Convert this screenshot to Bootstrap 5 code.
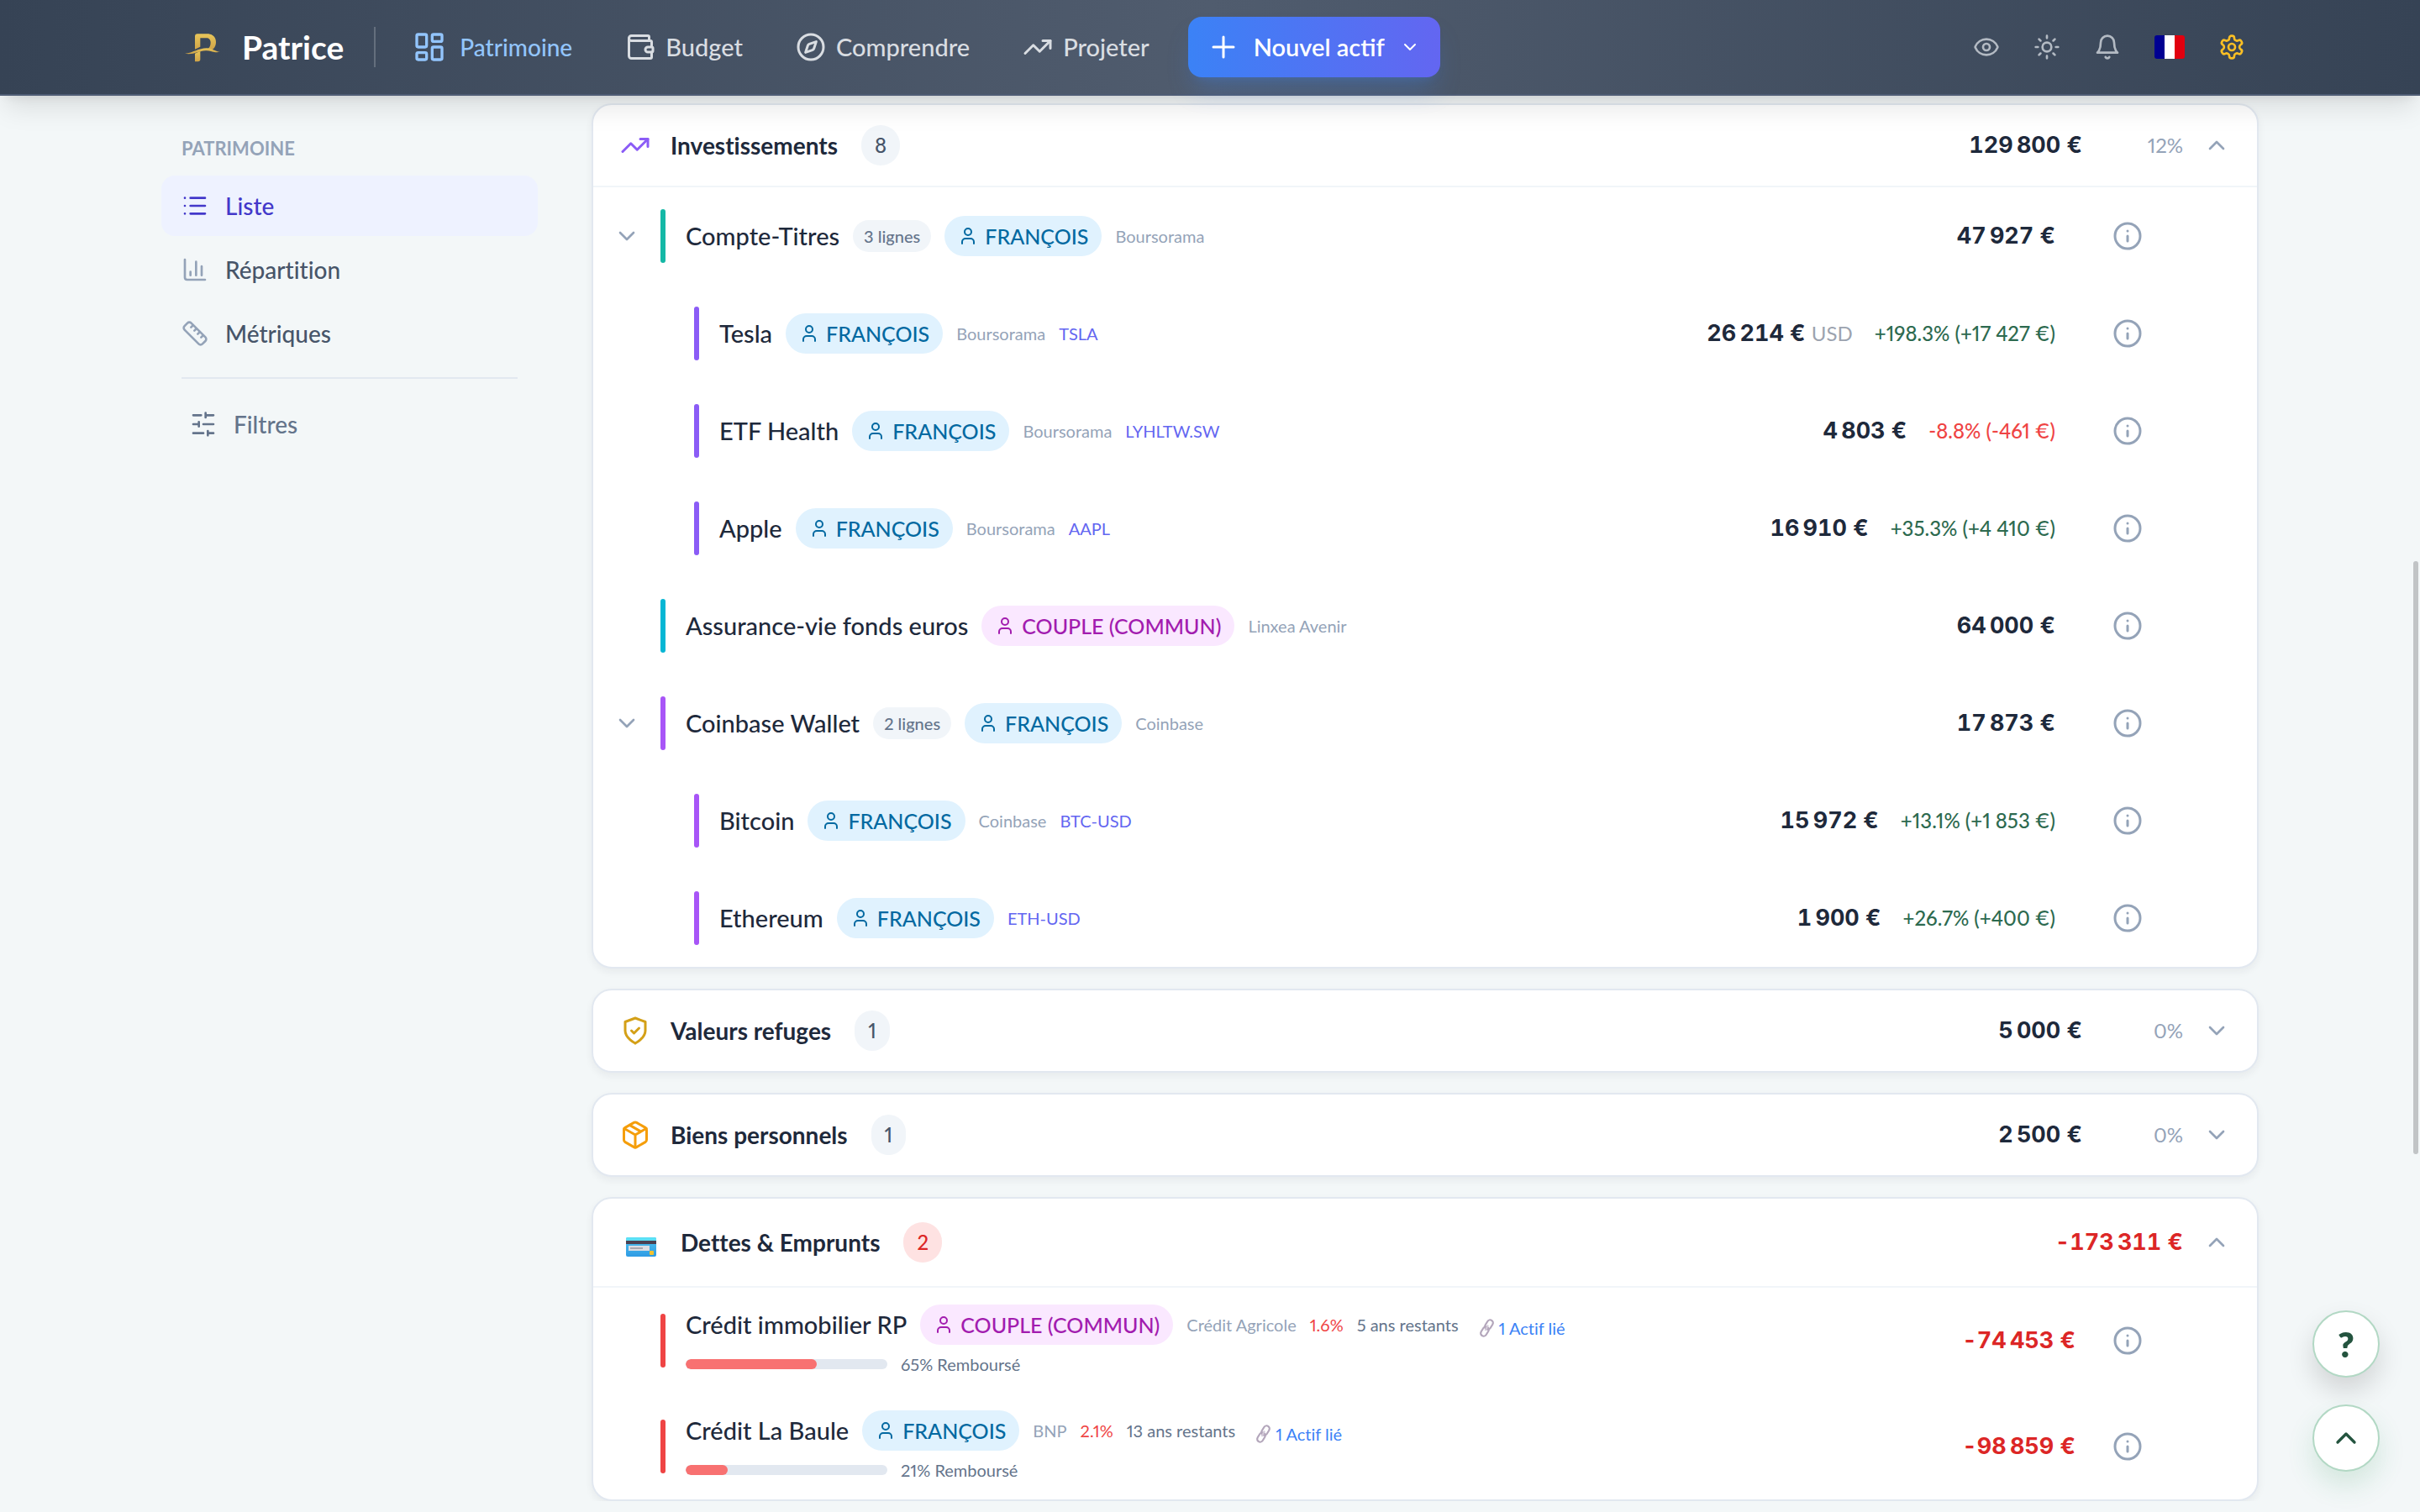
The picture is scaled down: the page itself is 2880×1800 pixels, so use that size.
<!DOCTYPE html>
<html lang="fr">
<head>
<meta charset="utf-8">
<meta name="viewport" content="width=device-width, initial-scale=1">
<title>Patrice – Patrimoine</title>
<link href="https://cdn.jsdelivr.net/npm/bootstrap@5.3.0/dist/css/bootstrap.min.css" rel="stylesheet">
<style>
  :root { --ink: #1e293b; --slate: #475569; --muted: #64748b; --soft: #94a3b8; --line: #e2e8f0; --wash: #f1f5f9; }
  body { font-family: Lato, "Open Sans", sans-serif; font-size: 28px; line-height: 40px; color: var(--ink); background: #f3f7f8; font-variant-ligatures: none; font-variant-numeric: proportional-nums; }
  a { text-decoration: none; }
  .ico { flex: none; fill: none; stroke: currentColor; stroke-width: 2; stroke-linecap: round; stroke-linejoin: round; width: 36px; height: 36px; }
  .ico-40 { width: 40px; height: 40px; }
  .ico-32 { width: 32px; height: 32px; }
  .ico-24 { width: 24px; height: 24px; }
  .shell { width: 100%; max-width: 2496px; margin-inline: auto; }

  .topbar { height: 114px; z-index: 10; background: linear-gradient(90deg, #364355, #505c6e 50%, #364355); border-bottom: 2px solid #4f5d75; box-shadow: 0 20px 30px -6px rgba(0,0,0,.1), 0 8px 12px -8px rgba(0,0,0,.1); }
  .topbar .shell { padding-inline: 28px 16px; }
  .brand { gap: 26px; color: #fff; font-size: 39px; font-weight: 700; }
  .brand:hover { color: #fff; }
  .rule-v { width: 2px; height: 48px; margin-inline: 36px 44px; background: rgba(255,255,255,.2); }
  .main-links { gap: 63px; }
  .main-links a { gap: 12px; font-size: 29px; font-weight: 500; color: #d9dde2; }
  .main-links a.on { gap: 16px; font-size: 28px; color: #93c5fd; }
  .btn-new { height: 72px; margin-left: 46px; padding: 0 24px; gap: 18px; border: 0; border-radius: 16px; color: #fff; font-size: 29px; font-weight: 600; background: linear-gradient(90deg, #3b82f6, #6366f1); box-shadow: 0 20px 30px -6px rgba(59,130,246,.25), 0 8px 12px -8px rgba(59,130,246,.25); }
  .tools { gap: 40px; color: #b3bac3; }
  .tools button { padding: 0; border: 0; background: none; color: inherit; line-height: 0; }
  .tools .gear { color: #fbbf24; }

  .layout { gap: 64px; padding-top: 9px; }
  .side { width: 448px; flex: none; padding-top: 38px; }
  .side-title { margin: 0 0 16px; padding-inline: 24px; font-size: 22px; line-height: 32px; font-weight: 700; color: var(--soft); }
  .side-links { gap: 4px; }
  .side-links a { height: 72px; padding-inline: 24px; gap: 20px; border-radius: 16px; font-weight: 500; color: var(--slate); }
  .side-links .ico { color: var(--soft); }
  .side-links a.on, .side-links a.on .ico { color: #4338ca; }
  .side-links a.on { background: #eef2ff; }
  .side-rule { height: 2px; margin: 16px 24px; background: var(--line); }
  .filter-btn { height: 76px; padding: 0 34px; gap: 20px; border: 0; background: none; color: var(--muted); font-weight: 500; }

  .panel-list { gap: 24px; min-width: 0; }
  .panel { background: #fff; border: 2px solid var(--line); border-radius: 24px; box-shadow: 0 4px 10px rgba(30,41,59,.06); }
  .panel-head { min-height: 96px; padding-inline: 32px; gap: 24px; }
  .panel-head.open { border-bottom: 2px solid var(--wash); min-height: 98px; }
  .panel-head.tall { min-height: 106px; }
  .panel-head h2 { margin: 0 4px 0 0; font-size: 28px; line-height: 40px; font-weight: 700; }
  .tally { height: 48px; padding-inline: 16px; border-radius: 24px; background: var(--wash); color: var(--slate); font-size: 24px; line-height: 48px; font-weight: 500; }
  .tally.debt { background: #fee2e2; color: #dc2626; }
  .share { width: 96px; text-align: right; font-size: 24px; color: var(--soft); }
  .toggle { padding: 0; border: 0; background: none; color: var(--soft); line-height: 0; }
  .sum { font-family: Inter, sans-serif; font-weight: 700; font-size: 27px; font-variant-numeric: tabular-nums; white-space: nowrap; }
  .neg { color: #dc2626; }

  .line-row { min-height: 116px; padding: 0 136px 0 24px; gap: 24px; }
  .line-row.child { padding-left: 120px; }
  .line-row.loan { min-height: 126px; }
  .slot { width: 32px; flex: none; line-height: 0; }
  .stripe { width: 6px; height: 64px; border-radius: 3px; flex: none; }
  .s-teal { background: #14b8a6; } .s-violet { background: #8b5cf6; } .s-cyan { background: #06b6d4; } .s-purple { background: #a855f7; } .s-red { background: #ef4444; }
  .tags { gap: 16px; font-size: 20px; line-height: 30px; white-space: nowrap; }
  .asset { font-size: 29px; line-height: 40px; font-weight: 500; color: var(--ink); }
  .pill-lines { height: 38px; padding-inline: 13px; border-radius: 19px; background: var(--wash); color: var(--muted); line-height: 38px; font-weight: 500; }
  .pill-owner { height: 48px; padding-inline: 16px; gap: 8px; border-radius: 24px; font-size: 25px; font-weight: 500; background: #e0f2fe; color: #0369a1; }
  .pill-owner.both { background: #fae8ff; color: #a21caf; }
  .bank { color: var(--soft); }
  .tick { color: #6366f1; }
  .money { gap: 26px; }
  .gain { font-size: 24px; font-weight: 500; color: #2d6a4f; white-space: nowrap; }
  .gain.down { color: #ef4444; }
  .cur { font-size: 24px; font-weight: 400; color: #9ca3af; font-family: Lato, sans-serif; }
  .info { padding: 0; margin-left: 44px; border: 0; background: none; color: var(--soft); line-height: 0; }
  .loan .info { margin-left: 20px; }
  .rate { color: #ef4444; }
  .left-term { color: var(--muted); }
  .linked { gap: 4px; padding-top: 8px; margin-left: 8px; color: #3b82f6; }
  .repay { gap: 16px; font-size: 20px; line-height: 30px; color: var(--muted); }
  .repay .progress { width: 240px; height: 12px; border-radius: 6px; background: var(--line); }
  .repay .progress-bar { background: #f87171; border-radius: 6px; }

  .floaters { right: 48px; bottom: 48px; gap: 32px; z-index: 20; }
  .round-btn { width: 80px; height: 80px; border: 2px solid #b2d8c4; border-radius: 50%; background: #fff; color: #24543f; font-size: 42px; font-weight: 800; box-shadow: 0 16px 32px rgba(0,0,0,.14); }
  .round-btn.up { box-shadow: 0 16px 32px rgba(45,150,90,.16); }
  .thumb { right: 2px; top: 668px; width: 6px; height: 706px; border-radius: 3px; background: #c1c4c6; z-index: 20; }
</style>
<script src="https://cdn.jsdelivr.net/npm/bootstrap@5.3.0/dist/js/bootstrap.bundle.min.js"></script>
</head>
<body>
<svg class="d-none" aria-hidden="true">
  <symbol id="i-trend" viewBox="0 0 24 24"><path d="M22 7l-8.500 8.500-5-5L2 17"/><path d="M16 7h6v6"/></symbol>
  <symbol id="i-down" viewBox="0 0 24 24"><path d="m6 9 6 6 6-6"/></symbol>
  <symbol id="i-up" viewBox="0 0 24 24"><path d="m18 15-6-6-6 6"/></symbol>
  <symbol id="i-user" viewBox="0 0 24 24"><path d="M19 21v-2a4 4 0 0 0-4-4H9a4 4 0 0 0-4 4v2"/><circle cx="12" cy="7" r="4"/></symbol>
  <symbol id="i-info" viewBox="0 0 24 24"><circle cx="12" cy="12" r="10"/><path d="M12 16v-4M12 8h.01"/></symbol>
  <symbol id="i-chain" viewBox="0 0 20 24"><g fill="none" stroke="#b3a6bb" stroke-width="2.200"><rect x="8.500" y="2" width="7" height="12" rx="3.500" transform="rotate(32 12 8)"/><rect x="3.500" y="10" width="7" height="12" rx="3.500" transform="rotate(32 7 16)"/></g><path d="M11 8.500 7.500 15" stroke="#d3cad8" stroke-width="2"/></symbol>
</svg>

<header class="topbar sticky-top d-flex">
  <div class="shell d-flex align-items-center">
    <a class="brand d-flex align-items-center" href="#">
      <svg width="42" height="35" viewBox="30 30 126 104" aria-hidden="true">
        <defs><linearGradient id="gold" x1="0" y1="0" x2="0" y2="1"><stop offset="0" stop-color="#e8c65a"/><stop offset="1" stop-color="#cfa347"/></linearGradient></defs>
        <g fill="url(#gold)"><path d="M66 42q0-9 9-9h35c20 0 31 13 31 30 0 12-5 21-14 28l-15-4c7-5 10-12 10-22 0-11-6-17-15-17H85v32l-19 9z"/><path d="M66 104l19-9v29q0 8-8 8H66z"/><path d="M30 104c30-3 48-20 78-20 20 0 28 12 47 14-20 5-32-6-50-5-28 1-42 16-75 11z"/></g>
      </svg>
      <span>Patrice</span>
    </a>
    <span class="rule-v"></span>
    <nav class="main-links d-flex">
      <a class="on d-flex align-items-center" href="#"><svg class="ico ico-40" viewBox="0 0 24 24"><rect x="3" y="3" width="7" height="9" rx="1"/><rect x="14" y="3" width="7" height="5" rx="1"/><rect x="14" y="12" width="7" height="9" rx="1"/><rect x="3" y="16" width="7" height="5" rx="1"/></svg>Patrimoine</a>
      <a class="d-flex align-items-center" href="#"><svg class="ico" viewBox="0 0 24 24"><path d="M19 7V4a1 1 0 0 0-1-1H5a2 2 0 0 0 0 4h15a1 1 0 0 1 1 1v4h-3a2 2 0 0 0 0 4h3a1 1 0 0 0 1-1v-2a1 1 0 0 0-1-1"/><path d="M3 5v14a2 2 0 0 0 2 2h15a1 1 0 0 0 1-1v-4"/></svg>Budget</a>
      <a class="d-flex align-items-center" href="#"><svg class="ico" viewBox="0 0 24 24"><circle cx="12" cy="12" r="10"/><path d="m16.240 7.760-1.800 5.410a2 2 0 0 1-1.270 1.270L7.760 16.240l1.800-5.410a2 2 0 0 1 1.270-1.270z"/></svg>Comprendre</a>
      <a class="d-flex align-items-center" href="#"><svg class="ico"><use href="#i-trend"/></svg>Projeter</a>
    </nav>
    <button class="btn-new btn d-flex align-items-center" type="button"><svg class="ico" viewBox="0 0 24 24"><path d="M4 12h16M12 4v16"/></svg>Nouvel actif<svg class="ico ico-24"><use href="#i-down"/></svg></button>
    <div class="tools d-flex align-items-center ms-auto">
      <button type="button" aria-label="Masquer les montants"><svg class="ico ico-32" viewBox="0 0 24 24"><path d="M2.060 12.350a1 1 0 0 1 0-.7 10.750 10.750 0 0 1 19.880 0 1 1 0 0 1 0 .7 10.750 10.750 0 0 1-19.880 0"/><circle cx="12" cy="12" r="3"/></svg></button>
      <button type="button" aria-label="Thème"><svg class="ico ico-32" viewBox="0 0 24 24"><circle cx="12" cy="12" r="4"/><path d="M12 2v2M12 20v2M4.930 4.930l1.410 1.410M17.660 17.660l1.410 1.410M2 12h2M20 12h2M6.340 17.660l-1.410 1.410M19.070 4.930l-1.410 1.410"/></svg></button>
      <button type="button" aria-label="Notifications"><svg class="ico ico-32" viewBox="0 0 24 24"><path d="M6 8a6 6 0 0 1 12 0c0 7 3 9 3 9H3s3-2 3-9"/><path d="M10.300 21a1.940 1.940 0 0 0 3.400 0"/></svg></button>
      <button type="button" aria-label="Langue"><svg width="36" height="28" viewBox="0 0 36 28"><defs><clipPath id="fr"><rect width="36" height="28" rx="3"/></clipPath></defs><g clip-path="url(#fr)"><path fill="#000091" d="M0 0h12v28H0z"/><path fill="#fff" d="M12 0h12v28H12z"/><path fill="#e1000f" d="M24 0h12v28H24z"/></g></svg></button>
      <button class="gear" type="button" aria-label="Réglages"><svg class="ico ico-32" viewBox="0 0 24 24"><path d="M12.220 2h-.440a2 2 0 0 0-2 2v.180a2 2 0 0 1-1 1.730l-.430.250a2 2 0 0 1-2 0l-.150-.080a2 2 0 0 0-2.730.730l-.220.380a2 2 0 0 0 .730 2.730l.150.100a2 2 0 0 1 1 1.720v.510a2 2 0 0 1-1 1.740l-.150.090a2 2 0 0 0-.730 2.730l.220.380a2 2 0 0 0 2.730.730l.150-.080a2 2 0 0 1 2 0l.430.250a2 2 0 0 1 1 1.730V20a2 2 0 0 0 2 2h.440a2 2 0 0 0 2-2v-.180a2 2 0 0 1 1-1.730l.430-.250a2 2 0 0 1 2 0l.150.080a2 2 0 0 0 2.730-.730l.220-.390a2 2 0 0 0-.730-2.730l-.150-.080a2 2 0 0 1-1-1.740v-.500a2 2 0 0 1 1-1.740l.150-.090a2 2 0 0 0 .730-2.730l-.220-.380a2 2 0 0 0-2.730-.730l-.150.080a2 2 0 0 1-2 0l-.430-.250a2 2 0 0 1-1-1.730V4a2 2 0 0 0-2-2z"/><circle cx="12" cy="12" r="3"/></svg></button>
    </div>
  </div>
</header>

<div class="shell layout d-flex">
  <aside class="side">
    <h1 class="side-title">PATRIMOINE</h1>
    <nav class="side-links d-flex flex-column">
      <a class="on d-flex align-items-center" href="#"><svg class="ico ico-32" viewBox="0 0 24 24"><path d="M8 5h13M8 12h13M8 19h13M3 5h.010M3 12h.010M3 19h.010"/></svg>Liste</a>
      <a class="d-flex align-items-center" href="#"><svg class="ico ico-32" viewBox="0 0 24 24"><path d="M3 3v16a2 2 0 0 0 2 2h16M18 17V9M13 17V5M8 17v-3"/></svg>Répartition</a>
      <a class="d-flex align-items-center" href="#"><svg class="ico ico-32" viewBox="0 0 24 24"><path d="M21.300 15.300a2.400 2.400 0 0 1 0 3.400l-2.600 2.600a2.400 2.400 0 0 1-3.400 0L2.700 8.700a2.410 2.410 0 0 1 0-3.400l2.600-2.600a2.410 2.410 0 0 1 3.400 0ZM14.500 12.500l2-2M11.500 9.500l2-2M8.500 6.500l2-2M17.500 15.500l2-2"/></svg>Métriques</a>
    </nav>
    <div class="side-rule"></div>
    <button class="filter-btn d-flex align-items-center" type="button"><svg class="ico ico-32" viewBox="0 0 24 24"><path d="M21 4h-7M10 4H3M21 12h-9M8 12H3M21 20h-5M12 20H3M14 2v4M8 10v4M16 18v4"/></svg>Filtres</button>
  </aside>

  <main class="panel-list d-flex flex-column flex-grow-1">
    <section class="panel">
      <div class="panel-head open d-flex align-items-center">
        <svg class="ico" style="color:#8b5cf6"><use href="#i-trend"/></svg>
        <h2>Investissements</h2><span class="tally">8</span>
        <span class="sum ms-auto">129&#8239;800 €</span><span class="share">12%</span>
        <button class="toggle" type="button" aria-label="Replier"><svg class="ico ico-32"><use href="#i-up"/></svg></button>
      </div>

      <div class="line-row d-flex align-items-center">
        <button class="slot toggle" type="button" aria-label="Replier"><svg class="ico ico-32"><use href="#i-down"/></svg></button>
        <span class="stripe s-teal"></span>
        <div class="tags d-flex align-items-center"><span class="asset">Compte-Titres</span><span class="pill-lines">3 lignes</span><span class="pill-owner d-flex align-items-center"><svg class="ico ico-24"><use href="#i-user"/></svg>FRANÇOIS</span><span class="bank">Boursorama</span></div>
        <div class="money d-flex align-items-center ms-auto"><span class="sum">47&#8239;927 €</span></div>
        <button class="info" type="button" aria-label="Détails"><svg class="ico"><use href="#i-info"/></svg></button>
      </div>

      <div class="line-row child d-flex align-items-center">
        <span class="stripe s-violet"></span>
        <div class="tags d-flex align-items-center"><span class="asset">Tesla</span><span class="pill-owner d-flex align-items-center"><svg class="ico ico-24"><use href="#i-user"/></svg>FRANÇOIS</span><span class="bank">Boursorama</span><a class="tick" href="#">TSLA</a></div>
        <div class="money d-flex align-items-center ms-auto"><span class="sum">26&#8239;214 € <span class="cur">USD</span></span><span class="gain">+198.3% (+17&#8239;427 €)</span></div>
        <button class="info" type="button" aria-label="Détails"><svg class="ico"><use href="#i-info"/></svg></button>
      </div>

      <div class="line-row child d-flex align-items-center">
        <span class="stripe s-violet"></span>
        <div class="tags d-flex align-items-center"><span class="asset">ETF Health</span><span class="pill-owner d-flex align-items-center"><svg class="ico ico-24"><use href="#i-user"/></svg>FRANÇOIS</span><span class="bank">Boursorama</span><a class="tick" href="#">LYHLTW.SW</a></div>
        <div class="money d-flex align-items-center ms-auto"><span class="sum">4&#8239;803 €</span><span class="gain down">-8.8% (-461 €)</span></div>
        <button class="info" type="button" aria-label="Détails"><svg class="ico"><use href="#i-info"/></svg></button>
      </div>

      <div class="line-row child d-flex align-items-center">
        <span class="stripe s-violet"></span>
        <div class="tags d-flex align-items-center"><span class="asset">Apple</span><span class="pill-owner d-flex align-items-center"><svg class="ico ico-24"><use href="#i-user"/></svg>FRANÇOIS</span><span class="bank">Boursorama</span><a class="tick" href="#">AAPL</a></div>
        <div class="money d-flex align-items-center ms-auto"><span class="sum">16&#8239;910 €</span><span class="gain">+35.3% (+4&#8239;410 €)</span></div>
        <button class="info" type="button" aria-label="Détails"><svg class="ico"><use href="#i-info"/></svg></button>
      </div>

      <div class="line-row d-flex align-items-center">
        <span class="slot"></span>
        <span class="stripe s-cyan"></span>
        <div class="tags d-flex align-items-center"><span class="asset">Assurance-vie fonds euros</span><span class="pill-owner both d-flex align-items-center"><svg class="ico ico-24"><use href="#i-user"/></svg>COUPLE (COMMUN)</span><span class="bank">Linxea Avenir</span></div>
        <div class="money d-flex align-items-center ms-auto"><span class="sum">64&#8239;000 €</span></div>
        <button class="info" type="button" aria-label="Détails"><svg class="ico"><use href="#i-info"/></svg></button>
      </div>

      <div class="line-row d-flex align-items-center">
        <button class="slot toggle" type="button" aria-label="Replier"><svg class="ico ico-32"><use href="#i-down"/></svg></button>
        <span class="stripe s-purple"></span>
        <div class="tags d-flex align-items-center"><span class="asset">Coinbase Wallet</span><span class="pill-lines">2 lignes</span><span class="pill-owner d-flex align-items-center"><svg class="ico ico-24"><use href="#i-user"/></svg>FRANÇOIS</span><span class="bank">Coinbase</span></div>
        <div class="money d-flex align-items-center ms-auto"><span class="sum">17&#8239;873 €</span></div>
        <button class="info" type="button" aria-label="Détails"><svg class="ico"><use href="#i-info"/></svg></button>
      </div>

      <div class="line-row child d-flex align-items-center">
        <span class="stripe s-purple"></span>
        <div class="tags d-flex align-items-center"><span class="asset">Bitcoin</span><span class="pill-owner d-flex align-items-center"><svg class="ico ico-24"><use href="#i-user"/></svg>FRANÇOIS</span><span class="bank">Coinbase</span><a class="tick" href="#">BTC-USD</a></div>
        <div class="money d-flex align-items-center ms-auto"><span class="sum">15&#8239;972 €</span><span class="gain">+13.1% (+1&#8239;853 €)</span></div>
        <button class="info" type="button" aria-label="Détails"><svg class="ico"><use href="#i-info"/></svg></button>
      </div>

      <div class="line-row child d-flex align-items-center">
        <span class="stripe s-purple"></span>
        <div class="tags d-flex align-items-center"><span class="asset">Ethereum</span><span class="pill-owner d-flex align-items-center"><svg class="ico ico-24"><use href="#i-user"/></svg>FRANÇOIS</span><a class="tick" href="#">ETH-USD</a></div>
        <div class="money d-flex align-items-center ms-auto"><span class="sum">1&#8239;900 €</span><span class="gain">+26.7% (+400 €)</span></div>
        <button class="info" type="button" aria-label="Détails"><svg class="ico"><use href="#i-info"/></svg></button>
      </div>
    </section>

    <section class="panel">
      <div class="panel-head d-flex align-items-center">
        <svg class="ico" viewBox="0 0 24 24" style="color:#d4a017"><path d="M12 22s8-4 8-10V5l-8-3-8 3v7c0 6 8 10 8 10"/><path d="m9 12 2 2 4-4"/></svg>
        <h2>Valeurs refuges</h2><span class="tally">1</span>
        <span class="sum ms-auto">5&#8239;000 €</span><span class="share">0%</span>
        <button class="toggle" type="button" aria-label="Déplier"><svg class="ico ico-32"><use href="#i-down"/></svg></button>
      </div>
    </section>

    <section class="panel">
      <div class="panel-head d-flex align-items-center">
        <svg class="ico" viewBox="0 0 24 24" style="color:#f59e0b"><path d="M21 8a2 2 0 0 0-1-1.730l-7-4a2 2 0 0 0-2 0l-7 4A2 2 0 0 0 3 8v8a2 2 0 0 0 1 1.730l7 4a2 2 0 0 0 2 0l7-4A2 2 0 0 0 21 16Z"/><path d="m3.300 7 8.700 5 8.700-5M12 22V12M7.500 4.270l9 5.150"/></svg>
        <h2>Biens personnels</h2><span class="tally">1</span>
        <span class="sum ms-auto">2&#8239;500 €</span><span class="share">0%</span>
        <button class="toggle" type="button" aria-label="Déplier"><svg class="ico ico-32"><use href="#i-down"/></svg></button>
      </div>
    </section>

    <section class="panel">
      <div class="panel-head open tall d-flex align-items-center">
        <svg width="48" height="36" viewBox="0 0 48 36" aria-hidden="true"><defs><linearGradient id="cardblue" x1="0" y1="0" x2="0" y2="1"><stop offset="0" stop-color="#4fc3ee"/><stop offset="1" stop-color="#2f9be4"/></linearGradient></defs><rect x="7" y="12" width="36" height="23" rx="2" fill="url(#cardblue)"/><path d="M7 16v-2q0-2 2-2h32q2 0 2 2v2z" fill="#5be0f5"/><path d="M7 16h36v4H7z" fill="#4b4152"/><rect x="10" y="22" width="25" height="6" fill="#dcdde3"/><path d="M12 24h15v2H12z" fill="#a9a9b0"/><rect x="35" y="28" width="5" height="5" rx="1" fill="#f2c230"/></svg>
        <h2>Dettes &amp; Emprunts</h2><span class="tally debt">2</span>
        <span class="sum neg ms-auto">-173&#8239;311 €</span>
        <button class="toggle" type="button" aria-label="Replier"><svg class="ico ico-32"><use href="#i-up"/></svg></button>
      </div>

      <div class="line-row loan d-flex align-items-center">
        <span class="slot"></span>
        <span class="stripe s-red"></span>
        <div class="d-flex flex-column gap-2">
          <div class="tags d-flex align-items-center"><span class="asset">Crédit immobilier RP</span><span class="pill-owner both d-flex align-items-center"><svg class="ico ico-24"><use href="#i-user"/></svg>COUPLE (COMMUN)</span><span class="bank">Crédit Agricole</span><span class="rate">1.6%</span><span class="left-term">5 ans restants</span><a class="linked d-flex align-items-center" href="#"><svg width="20" height="24"><use href="#i-chain"/></svg>1 Actif lié</a></div>
          <div class="repay d-flex align-items-center"><div class="progress"><div class="progress-bar" style="width:65%"></div></div>65% Remboursé</div>
        </div>
        <span class="sum neg ms-auto">-74&#8239;453 €</span>
        <button class="info" type="button" aria-label="Détails"><svg class="ico"><use href="#i-info"/></svg></button>
      </div>

      <div class="line-row loan d-flex align-items-center">
        <span class="slot"></span>
        <span class="stripe s-red"></span>
        <div class="d-flex flex-column gap-2">
          <div class="tags d-flex align-items-center"><span class="asset">Crédit La Baule</span><span class="pill-owner d-flex align-items-center"><svg class="ico ico-24"><use href="#i-user"/></svg>FRANÇOIS</span><span class="bank">BNP</span><span class="rate">2.1%</span><span class="left-term">13 ans restants</span><a class="linked d-flex align-items-center" href="#"><svg width="20" height="24"><use href="#i-chain"/></svg>1 Actif lié</a></div>
          <div class="repay d-flex align-items-center"><div class="progress"><div class="progress-bar" style="width:21%"></div></div>21% Remboursé</div>
        </div>
        <span class="sum neg ms-auto">-98&#8239;859 €</span>
        <button class="info" type="button" aria-label="Détails"><svg class="ico"><use href="#i-info"/></svg></button>
      </div>
    </section>
  </main>
</div>

<div class="floaters position-fixed d-flex flex-column">
  <button class="round-btn d-flex align-items-center justify-content-center p-0" type="button" aria-label="Aide">?</button>
  <button class="round-btn up d-flex align-items-center justify-content-center p-0" type="button" aria-label="Haut de page"><svg class="ico ico-40"><use href="#i-up"/></svg></button>
</div>
<div class="thumb position-fixed"></div>
</body>
</html>
